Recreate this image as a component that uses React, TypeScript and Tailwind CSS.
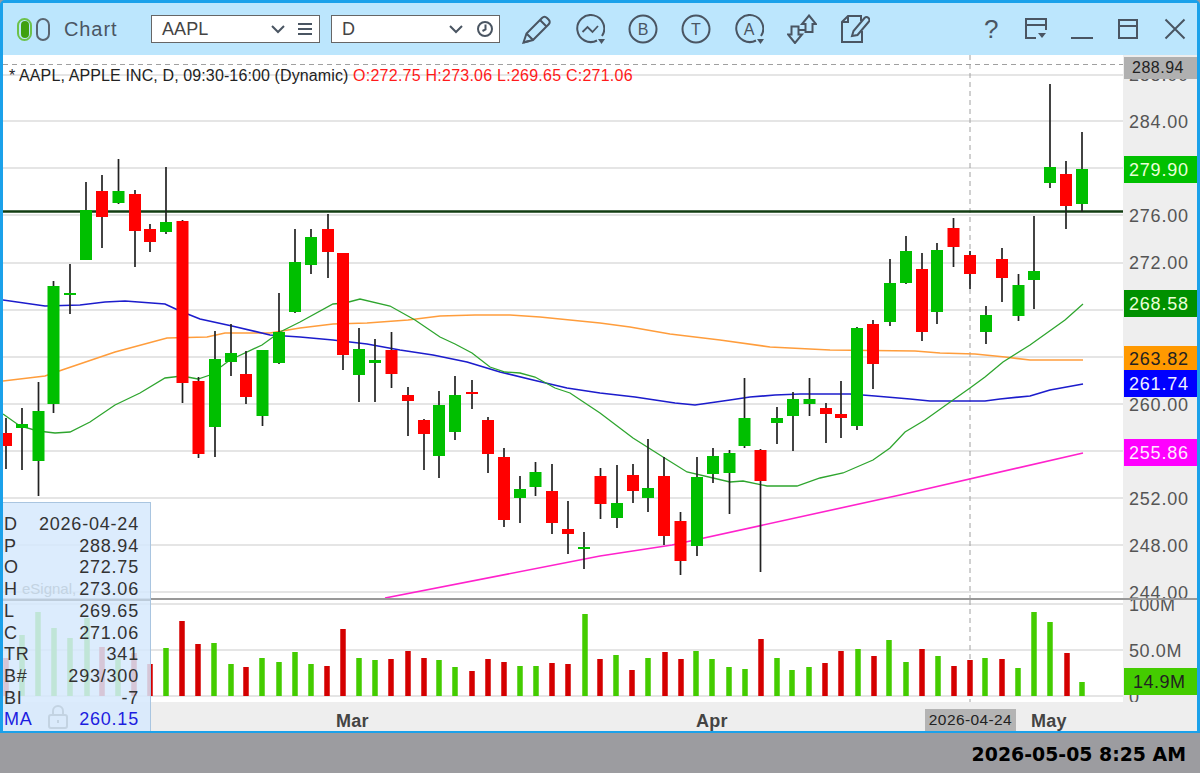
import React from "react";

type Candle = [number, number, number, number, number, "g" | "r"];

// x, wick top, wick bottom, body top, body bottom, colour
const candles: Candle[] = [
  [6, 418, 469, 433, 446, "r"], [22, 408, 470, 424, 428, "g"], [38.5, 382, 496, 411, 461, "g"], [53.5, 281, 413, 286, 404, "g"],
  [70, 264, 314, 293, 295, "g"], [86, 182, 210, 210, 260, "g"], [102, 175, 248, 191, 217, "r"], [118.5, 159, 204, 191, 203, "g"],
  [135, 190, 267, 194, 231, "r"], [150, 224, 252, 229, 242, "r"], [166, 167, 234, 222, 232, "g"], [182.5, 220, 403, 221, 383, "r"],
  [198.5, 377, 458, 381, 454, "r"], [215, 331, 457, 359, 427, "g"], [231, 324, 376, 353, 362, "g"], [246, 351, 404, 374, 397, "r"],
  [262.5, 350, 426, 350, 416, "g"], [279, 293, 364, 332, 363, "g"], [295, 229, 313, 262, 312, "g"], [311, 229, 274, 237, 265, "g"],
  [328, 214, 278, 229, 252, "r"], [343, 253, 370, 253, 355, "r"], [359, 328, 402, 349, 375, "g"], [375, 339, 402, 360, 363, "g"],
  [391.5, 332, 388, 350, 374, "r"], [408, 387, 436, 395, 401, "r"], [424, 419, 470, 420, 434, "r"], [439, 391, 478, 405, 456, "g"],
  [455, 376, 440, 395, 432, "g"], [472, 380, 409, 392, 394, "r"], [488, 417, 473, 420, 454, "r"], [504, 448, 527, 457, 520, "r"],
  [520, 476, 523, 489, 498, "g"], [535.5, 462, 496, 472, 487, "g"], [552, 464, 534, 491, 523, "r"], [568, 501, 554, 529, 534, "r"],
  [584, 532, 569, 547, 549, "g"], [600.5, 468, 519, 476, 504, "r"], [617, 465, 528, 503, 518, "g"], [633, 464, 503, 475, 491, "r"],
  [648, 439, 512, 488, 498, "g"], [664, 457, 545, 476, 536, "r"], [680.5, 512, 575, 521, 561, "r"], [697, 457, 556, 477, 546, "g"],
  [713, 448, 483, 456, 474, "g"], [729.5, 450, 514, 453, 473, "g"], [744.5, 378, 448, 418, 446, "g"], [760.5, 449, 572, 450, 481, "r"],
  [777, 407, 444, 418, 423, "g"], [793, 392, 451, 399, 416, "g"], [809.5, 378, 416, 399, 404, "g"], [826, 403, 443, 408, 414, "r"],
  [841, 381, 438, 414, 418, "r"], [857, 327, 430, 328, 426, "g"], [873, 320, 389, 324, 364, "r"], [890, 259, 326, 283, 322, "g"],
  [906, 236, 284, 251, 283, "g"], [922, 253, 341, 269, 332, "r"], [937, 243, 324, 250, 312, "g"], [953.5, 218, 267, 228, 247, "r"],
  [970, 251, 289, 255, 274, "r"], [986, 306, 344, 315, 332, "g"], [1002, 248, 302, 259, 278, "r"], [1018.5, 274, 321, 285, 316, "g"],
  [1034, 216, 309, 271, 280, "g"], [1050, 84, 188, 167, 183, "g"], [1066, 161, 229, 174, 206, "r"], [1082, 132, 212, 169, 204, "g"],
];

// x, top, colour
const volume: [number, number, "g" | "r"][] = [
  [6, 658, "r"], [22, 635, "g"], [38, 612, "g"], [54, 628, "g"], [70, 638, "g"], [87, 618, "g"], [102, 647, "r"], [118, 658, "g"], [134, 653, "r"],
  [150, 664, "r"], [166, 648, "g"], [182, 621, "r"], [198, 644, "r"], [214, 643, "g"], [231, 664, "g"], [246, 667, "r"], [262, 658, "g"],
  [279, 662, "g"], [295, 652, "g"], [311, 664, "g"], [327, 666, "r"], [343, 629, "r"], [359, 658, "g"], [375, 660, "g"], [391, 659, "r"],
  [408, 651, "r"], [424, 658, "r"], [439, 660, "g"], [455, 667, "g"], [472, 671, "r"], [488, 659, "r"], [504, 662, "r"], [520, 666, "g"],
  [536, 666, "g"], [552, 663, "r"], [568, 664, "r"], [585, 614, "g"], [600, 659, "r"], [616, 655, "g"], [632, 670, "r"], [648, 658, "g"],
  [665, 652, "r"], [681, 659, "r"], [696, 651, "g"], [712, 659, "g"], [729, 667, "g"], [745, 669, "g"], [761, 639, "r"], [777, 658, "g"],
  [792, 670, "g"], [809, 667, "g"], [825, 663, "r"], [841, 651, "r"], [858, 649, "g"], [874, 656, "r"], [889, 640, "g"], [906, 662, "g"],
  [922, 649, "r"], [938, 656, "g"], [954, 666, "r"], [970, 660, "r"], [985, 658, "g"], [1002, 659, "r"], [1018, 668, "g"], [1034, 612, "g"],
  [1050, 622, "g"], [1067, 653, "r"], [1082, 682, "g"],
];

const bluePts = "3,300 45,306 80,305 105,302 125,301 165,304 180,311 200,319 232,326 270,335 300,337 333,340 367,344 400,350 433,355 467,362 500,372 533,380 567,388 600,393 635,397 675,403 695,405 730,400 750,397 775,395 800,394 850,394 875,396 910,399 930,401 985,401 1000,399 1030,396 1050,390 1083,384";
const orangePts = "3,381 45,376 62,370 115,352 167,338 207,337 225,333 270,333 300,328 333,324 367,323 408,320 440,316 475,315 510,315 540,317 560,319 600,323 630,327 670,334 720,340 770,347 830,350 915,351 940,353 975,354 1005,357 1030,360 1083,360";
const greenPts = "3,414 20,426 38,431 55,433 70,432 90,422 115,405 140,393 165,378 182,376 198,379 210,375 230,360 262,345 280,332 300,322 333,304 345,303 360,299 390,306 415,320 440,337 455,344 472,353 490,367 505,372 520,373 535,377 555,388 570,393 600,413 633,438 663,457 687,472 713,478 730,482 743,481 767,486 797,486 820,478 843,473 873,460 890,448 905,432 925,420 953,400 970,388 985,377 1003,362 1030,345 1065,320 1083,304";
const magentaPts = "385,598 600,556 672,545 900,495 1083,453";

const priceGrid = [75, 121, 168, 215, 263, 310, 357, 404, 451, 498, 545, 592];
const priceLabels: [string, number][] = [
  ["288.00", 74], ["284.00", 121], ["276.00", 215], ["272.00", 262], ["260.00", 404], ["252.00", 498], ["248.00", 545], ["244.00", 592],
];

const infoRows: [string, string][] = [
  ["D", "2026-04-24"], ["P", "288.94"], ["O", "272.75"], ["H", "273.06"], ["L", "269.65"],
  ["C", "271.06"], ["TR", "341"], ["B#", "293/300"], ["BI", "-7"],
];

function Ico({ w = 30, h = 30, children }: { w?: number; h?: number; children: React.ReactNode }) {
  return (
    <svg width={w} height={h} viewBox={`0 0 ${w} ${h}`} fill="none" stroke="#4a5562" strokeWidth={2} className="shrink-0">
      {children}
    </svg>
  );
}

function CircleArrow({ children }: { children: React.ReactNode }) {
  return (
    <Ico>
      <path d="M22 26.5 A13.5 13.5 0 1 1 27 22" />
      <path d="M23 25h7l-3.5 5z" fill="#4a5562" stroke="none" />
      {children}
    </Ico>
  );
}

function IconLetter({ c }: { c: string }) {
  return (
    <text x="15" y="20.5" textAnchor="middle" fontSize="16" fontFamily="'Liberation Sans', sans-serif" fill="#4a5562" stroke="none">
      {c}
    </text>
  );
}

function Tag({ top, h, bg, color, children }: { top: number; h: number; bg: string; color: string; children: string }) {
  return (
    <div
      className="absolute left-[1px] right-0 flex items-center pl-[5px] pt-[2px] text-[18px] tracking-[0.8px]"
      style={{ top: top, height: h, background: bg, color }}
    >
      {children}
    </div>
  );
}

export default function App() {
  return (
    <div className="flex h-[773px] w-[1200px] flex-col overflow-hidden bg-[#9c9ca0] font-['Liberation_Sans',sans-serif]">
      <div className="flex h-[733px] flex-col rounded-t-[5px] border-x-[3px] border-t-[3px] border-b-2 border-[#1ba1ea] bg-[#eeeeee]">
        {/* title bar */}
        <div className="flex h-[52px] shrink-0 items-center bg-[#bce6fd] pl-[14px] text-[#4a5562]">
          <div className="flex w-[35px] items-center gap-[4px]">
            <div className="flex h-[23px] w-[15px] items-center justify-center rounded-full border-2 border-[#6cc24a]">
              <div className="h-[17px] w-[8px] rounded-full bg-[#3fa00f]" />
            </div>
            <div className="h-[23px] w-[14px] rounded-full border-2 border-[#5a6570]" />
          </div>
          <span className="ml-[12px] w-[87px] text-[20px] tracking-[0.9px]">Chart</span>
          <div className="flex h-[28px] w-[169px] items-center border border-[#666] bg-white pl-[10px] pr-[6px] text-[18px] tracking-[0.1px] text-[#444]">
            <span className="flex-1">AAPL</span>
            <svg width="16" height="10" viewBox="0 0 16 10" fill="none" stroke="#4a5562" strokeWidth="2"><path d="M2 2l6 6 6-6" /></svg>
            <svg width="16" height="14" viewBox="0 0 16 14" className="ml-[11px]" stroke="#4a5562" strokeWidth="2"><path d="M1 2h14M1 7h14M1 12h14" /></svg>
          </div>
          <div className="ml-[11px] flex h-[28px] w-[169px] items-center border border-[#666] bg-white pl-[10px] pr-[5px] text-[18px] text-[#444]">
            <span className="flex-1">D</span>
            <svg width="16" height="10" viewBox="0 0 16 10" fill="none" stroke="#4a5562" strokeWidth="2"><path d="M2 2l6 6 6-6" /></svg>
            <svg width="18" height="18" viewBox="0 0 18 18" fill="none" className="ml-[12px]" stroke="#4a5562" strokeWidth="2"><circle cx="9" cy="9" r="7" /><path d="M9.5 4.5V9.5L6.5 11" /></svg>
          </div>
          <div className="ml-[22px] flex items-center gap-[23px]">
            <Ico>
              <path d="M1.5 28.5l3-9L20 4q2.500-2.500 5 0l1.500 1.500q2.500 2.500 0 5L11 26z" />
              <path d="M4.500 19.500l6.500 6.500M18 6l6.500 6.500M1.500 28.500l5.500-1.500" />
            </Ico>
            <CircleArrow>
              <path d="M7.500 18l5-5 5 5 5.500-6" strokeWidth="1.800" />
            </CircleArrow>
            <Ico>
              <circle cx="15" cy="15" r="13.500" />
              <IconLetter c="B" />
            </Ico>
            <Ico>
              <circle cx="15" cy="15" r="13.500" />
              <IconLetter c="T" />
            </Ico>
            <CircleArrow>
              <IconLetter c="A" />
            </CircleArrow>
            <Ico>
              <path d="M22 1.500l7 8.500h-3.500v8H18.500v-8H15z" />
              <path d="M8 29l-7-8.500h3.500v-8h7v8H15z" />
              <path d="M11 16h7" />
            </Ico>
            <Ico>
              <path d="M21 7V2H8L2 8v20h20V17" />
              <path d="M8 2v6H2" />
              <path d="M12 22l1.500-5L24.500 4q2-2 4 0t0 4L17.500 21z" />
            </Ico>
          </div>
          <span className="ml-[114px] w-[40px] text-[26px] leading-none text-[#4a5562]">?</span>
          <Ico w={24} h={24}>
            <path d="M12 21H2V2h20v11M2 8h20" />
            <path d="M14 16h8l-4 5z" fill="#4a5562" stroke="none" />
          </Ico>
          <div className="ml-[23px] mt-[17px] h-[2px] w-[22px] bg-[#4a5562]" />
          <div className="ml-[24px]">
            <Ico w={22} h={22}>
              <path d="M2 2h18v18H2zM2 8h18" />
            </Ico>
          </div>
          <div className="ml-[25px]">
            <Ico w={22} h={22}>
              <path d="M1.500 1.500l19 19M20.500 1.500l-19 19" />
            </Ico>
          </div>
        </div>

        {/* chart */}
        <div className="relative flex flex-1 flex-col text-[#555]">
          <div className="flex h-[543px] shrink-0 overflow-hidden bg-white">
            <svg width="1120" height="543" viewBox="3 55 1120 543" className="block shrink-0">
              {priceGrid.map((y) => (
                <line key={y} x1="3" x2="1123" y1={y} y2={y} stroke="#dddddd" strokeWidth="1.600" />
              ))}
              <line x1="3" x2="1123" y1="64.500" y2="64.500" stroke="#a0a0a0" strokeDasharray="5 4" />
              <line x1="970" x2="970" y1="55" y2="598" stroke="#a0a0a0" strokeDasharray="5 4" />
              <line x1="3" x2="1123" y1="211.500" y2="211.500" stroke="#123c12" strokeWidth="2.500" />
              <polyline points={orangePts} fill="none" stroke="#ff9d3c" strokeWidth="1.700" />
              <polyline points={bluePts} fill="none" stroke="#1c1ccc" strokeWidth="1.700" />
              <polyline points={greenPts} fill="none" stroke="#2ea52e" strokeWidth="1.300" />
              <polyline points={magentaPts} fill="none" stroke="#ff22cc" strokeWidth="1.600" />
              {candles.map(([x, wt, wb, bt, bb, c], i) => (
                <g key={i}>
                  <line x1={x} x2={x} y1={wt} y2={wb} stroke="#222222" strokeWidth="1.700" />
                  <rect x={x - 6} y={bt} width="12" height={bb - bt} fill={c === "g" ? "#00bf00" : "#ff0000"} />
                </g>
              ))}
            </svg>
            <div className="relative flex-1 bg-[#eeeeee]">
              {priceLabels.map(([t, y]) => (
                <div key={t} className="absolute left-[6px] text-[18px] leading-[20px] tracking-[0.8px]" style={{ top: y - 64 }}>
                  {t}
                </div>
              ))}
              <div className="absolute left-[1px] right-0 top-[2px] flex h-[22px] items-center bg-[#b0b0b0] pl-[8px] text-[16px] tracking-[0.5px] text-[#222]">
                288.94
              </div>
              <Tag top={101} h={27} bg="#00c000" color="#eaffd8">279.90</Tag>
              <Tag top={235} h={27} bg="#009000" color="#eaffd8">268.58</Tag>
              <Tag top={291} h={24} bg="#ff9900" color="#222">263.82</Tag>
              <Tag top={315} h={27} bg="#0000ff" color="#f0f0ff">261.74</Tag>
              <Tag top={384} h={27} bg="#ff00ff" color="#ffe8ff">255.86</Tag>
            </div>
          </div>

          <div className="h-[2px] shrink-0 bg-[#999999]" />

          <div className="flex h-[102px] shrink-0 overflow-hidden bg-white">
            <svg width="1120" height="102" viewBox="3 600 1120 102" className="block shrink-0">
              {[604, 650, 696].map((y) => (
                <line key={y} x1="3" x2="1123" y1={y} y2={y} stroke="#dddddd" strokeWidth="1.500" />
              ))}
              <line x1="970" x2="970" y1="600" y2="702" stroke="#a0a0a0" strokeDasharray="5 4" />
              {volume.map(([x, t, c], i) => (
                <rect key={i} x={x - 2.750} y={t} width="5.500" height={696 - t} fill={c === "g" ? "#44cc00" : "#d40000"} />
              ))}
            </svg>
            <div className="relative flex-1 bg-[#eeeeee]">
              <div className="absolute left-[6px] top-[-5px] text-[18px] leading-[20px] tracking-[0.3px]">100M</div>
              <div className="absolute left-[6px] top-[41px] text-[18px] leading-[20px] tracking-[0.6px]">50.0M</div>
              <div className="absolute left-[6px] top-[87px] text-[18px] leading-[20px]">0</div>
              <div className="absolute left-[1px] right-0 top-[68px] flex h-[27px] items-center bg-[#44cc00] pl-[9px] pt-[2px] text-[18px] tracking-[0.5px] text-[#222]">
                14.9M
              </div>
            </div>
          </div>

          <div className="relative flex-1 bg-[#eeeeee] text-[18px] font-bold text-[#444]">
            <span className="absolute left-[333px] top-[6px] tracking-[0.3px]">Mar</span>
            <span className="absolute left-[693px] top-[6px] tracking-[0.3px]">Apr</span>
            <span className="absolute left-[1028px] top-[6px] tracking-[0.3px]">May</span>
            <div className="absolute left-[922px] top-[7px] flex h-[22px] w-[91px] items-center justify-center bg-[#b4b4b4] text-[15.500px] font-normal tracking-[0.400px] text-[#222]">
              2026-04-24
            </div>
          </div>

          {/* legend */}
          <div className="absolute left-[6px] top-[12px] whitespace-nowrap text-[16px] leading-[18px] tracking-[0.12px] text-[#222]">
            * AAPL, APPLE INC, D, 09:30-16:00 (Dynamic) <span className="tracking-[0.24px] text-[#ff1a1a]">O:272.75 H:273.06 L:269.65 C:271.06</span>
          </div>

          {/* data window */}
          <div className="absolute bottom-0 left-0 top-[447px] w-[148px] border-r border-t border-[#a9c5e0] bg-[#d6e9fd]/85 pl-[1px] pr-[11px] pt-[11px] text-[18px] leading-[21.700px] tracking-[0.8px] text-[#333]">
            <div className="absolute left-[19px] top-[75px] text-[15px] tracking-normal text-[#c3d3e2]">eSignal,</div>
            <div className="absolute inset-x-0 top-[96px] h-[2px] bg-[#bccbda]" />
            <svg width="20" height="24" viewBox="0 0 20 24" fill="none" stroke="#c3d3e2" strokeWidth="2" className="absolute left-[45px] top-[202px]">
              <rect x="1" y="10" width="18" height="13" rx="2" />
              <path d="M5 10V6a5 5 0 0 1 10 0v4M10 15v3" />
            </svg>
            <div className="relative">
              {infoRows.map(([k, v]) => (
                <div key={k} className="flex justify-between">
                  <span>{k}</span>
                  <span>{v}</span>
                </div>
              ))}
              <div className="flex justify-between text-[#1d1de0]">
                <span>MA</span>
                <span>260.15</span>
              </div>
            </div>
          </div>
        </div>
      </div>

      {/* status bar */}
      <div className="flex flex-1 items-center justify-end pr-[14px] pt-[3px] font-['DejaVu_Sans',sans-serif] text-[18.900px] font-bold text-black">
        2026-05-05 8:25 AM
      </div>
    </div>
  );
}
